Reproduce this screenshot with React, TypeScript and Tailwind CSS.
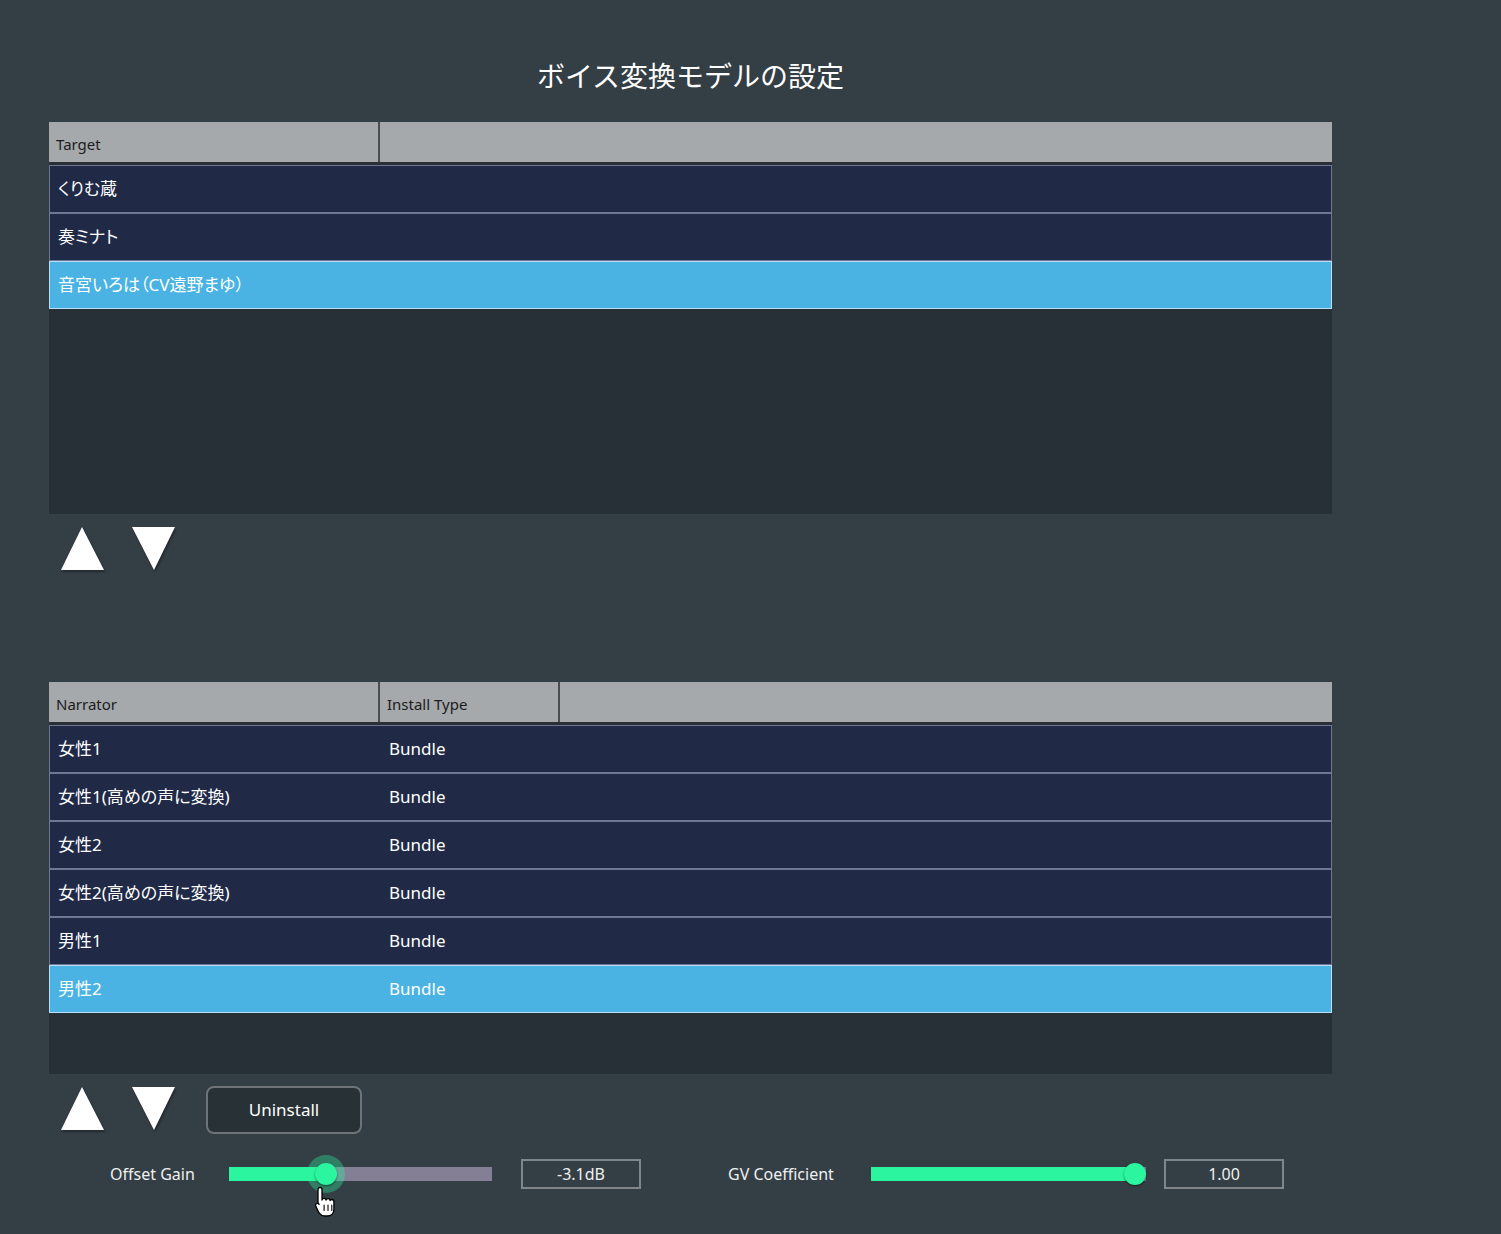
import React from "react";

const font = { fontFamily: '"Noto Sans", "Noto Sans CJK JP", sans-serif' };

function UpArrow() {
  return (
    <svg width="46" height="46" viewBox="0 0 46 46" className="drop-shadow-[1px_2px_1px_rgba(0,0,0,0.35)]">
      <polygon points="22,1 44,44 1,44" fill="#fff" />
    </svg>
  );
}

function DownArrow() {
  return (
    <svg width="46" height="46" viewBox="0 0 46 46" className="drop-shadow-[1px_2px_1px_rgba(0,0,0,0.35)]">
      <polygon points="1,1 44,1 23,44" fill="#fff" />
    </svg>
  );
}

type Row = { cells: string[]; selected?: boolean };

function Table({ headers, widths, rows, height }: { headers: string[]; widths: string[]; rows: Row[]; height: string }) {
  return (
    <div className={`bg-[#273037] w-[1283px] ${height} flex flex-col`}>
      <div className="flex h-[42px] bg-[#a5a9ab] border-b-2 border-[#2b2f33]">
        {headers.map((h, i) => (
          <div
            key={i}
            className={`${widths[i]} border-r-2 border-[#4a4d50] flex items-end pb-[7px] pl-[7px] text-[15px] text-[#1c1c1c]`}
          >
            {h}
          </div>
        ))}
        <div className="flex-1" />
      </div>
      <div className="pt-[1px]">
        {rows.map((r, i) => (
          <div
            key={i}
            className={`h-[48px] flex items-center text-[17px] text-white ${
              r.selected ? "bg-[#4ab3e3] border border-[#b8def3]" : "bg-[#202a47] border border-[#717792]"
            }`}
          >
            {r.cells.map((c, j) => (
              <div key={j} className={`${widths[j]} pl-[8px] -mt-[1px]`}>
                {c}
              </div>
            ))}
          </div>
        ))}
      </div>
    </div>
  );
}

function Slider({ width, pct, halo }: { width: string; pct: number; halo?: boolean }) {
  return (
    <div className={`relative ${width} h-[14px] bg-[#857f96]`}>
      <div className="absolute left-0 top-0 h-full bg-[#2bf59f]" style={{ width: `${pct}%` }} />
      <div className="absolute top-1/2 -translate-x-1/2 -translate-y-1/2" style={{ left: `${pct}%` }}>
        {halo && <div className="absolute left-1/2 top-1/2 -translate-x-1/2 -translate-y-1/2 w-[38px] h-[38px] rounded-full bg-[#2bf59f]/35" />}
        <div className="relative w-[22px] h-[22px] rounded-full bg-[#2bf59f] shadow-[0_1px_2px_rgba(0,0,0,0.5)]" />
      </div>
    </div>
  );
}

function HandCursor() {
  return (
    <svg width="26" height="34" viewBox="0 0 26 34" className="absolute left-[313px] top-[1185px]">
      <path
        d="M7 2.5c1.2 0 2 .9 2 2v10.5c.3-1 1.1-1.6 2.1-1.6 1.1 0 1.8.7 2 1.6.3-.8 1-1.3 2-1.3 1.1 0 1.9.8 2 1.8.3-.6 1-1 1.8-1 1.2 0 2 .9 2 2.2v7.3c0 4-2.6 7-6.9 7h-2.3c-2.6 0-4.3-1.1-5.8-3.3L3 21.6c-.7-1-.5-2.2.4-2.8.9-.6 2-.3 2.7.6L5 17.7V4.5c0-1.1.8-2 2-2z"
        fill="#fff"
        stroke="#000"
        strokeWidth="1.3"
        strokeLinejoin="round"
      />
      <path d="M11.1 20v5.5M15 20v5.5M18.8 20v5.5" stroke="#000" strokeWidth="1.1" strokeLinecap="round" />
    </svg>
  );
}

export default function App() {
  const targets: Row[] = [
    { cells: ["くりむ蔵"] },
    { cells: ["奏ミナト"] },
    { cells: ["音宮いろは（CV遠野まゆ）"], selected: true },
  ];
  const narrators: Row[] = [
    { cells: ["女性1", "Bundle"] },
    { cells: ["女性1(高めの声に変換)", "Bundle"] },
    { cells: ["女性2", "Bundle"] },
    { cells: ["女性2(高めの声に変換)", "Bundle"] },
    { cells: ["男性1", "Bundle"] },
    { cells: ["男性2", "Bundle"], selected: true },
  ];

  return (
    <div style={font} className="relative w-[1501px] h-[1234px] bg-[#343e45] overflow-hidden [font-feature-settings:'palt']">
      <div className="pl-[49px] pt-[55px]">
        <div className="w-[1283px] text-center text-[28px] leading-[42px] text-white [font-feature-settings:normal]">
          ボイス変換モデルの設定
        </div>

        <div className="mt-[25px]">
          <Table headers={["Target"]} widths={["w-[331px]"]} rows={targets} height="h-[392px]" />
        </div>
        <div className="flex gap-[25px] pl-[11px] mt-[12px]">
          <UpArrow />
          <DownArrow />
        </div>

        <div className="mt-[110px]">
          <Table
            headers={["Narrator", "Install Type"]}
            widths={["w-[331px]", "w-[180px]"]}
            rows={narrators}
            height="h-[392px]"
          />
        </div>
        <div className="flex items-start gap-[25px] pl-[11px] mt-[12px]">
          <UpArrow />
          <DownArrow />
          <button className="ml-[4px] w-[156px] h-[48px] rounded-[8px] border-2 border-[#6e7478] bg-[#283136] text-[17px] text-white">
            Uninstall
          </button>
        </div>

        <div className="flex items-center mt-[25px] h-[30px] text-[16px] text-[#eef0f0]">
          <div className="w-[180px] pl-[61px]">Offset Gain</div>
          <Slider width="w-[263px]" pct={37} halo />
          <div className="ml-[29px] w-[120px] h-[30px] border-2 border-[#7f878b] flex items-center justify-center">-3.1dB</div>
          <div className="ml-[87px] w-[143px]">GV Coefficient</div>
          <Slider width="w-[275px]" pct={96} />
          <div className="ml-[18px] w-[120px] h-[30px] border-2 border-[#7f878b] flex items-center justify-center">1.00</div>
        </div>
      </div>
      <HandCursor />
    </div>
  );
}
